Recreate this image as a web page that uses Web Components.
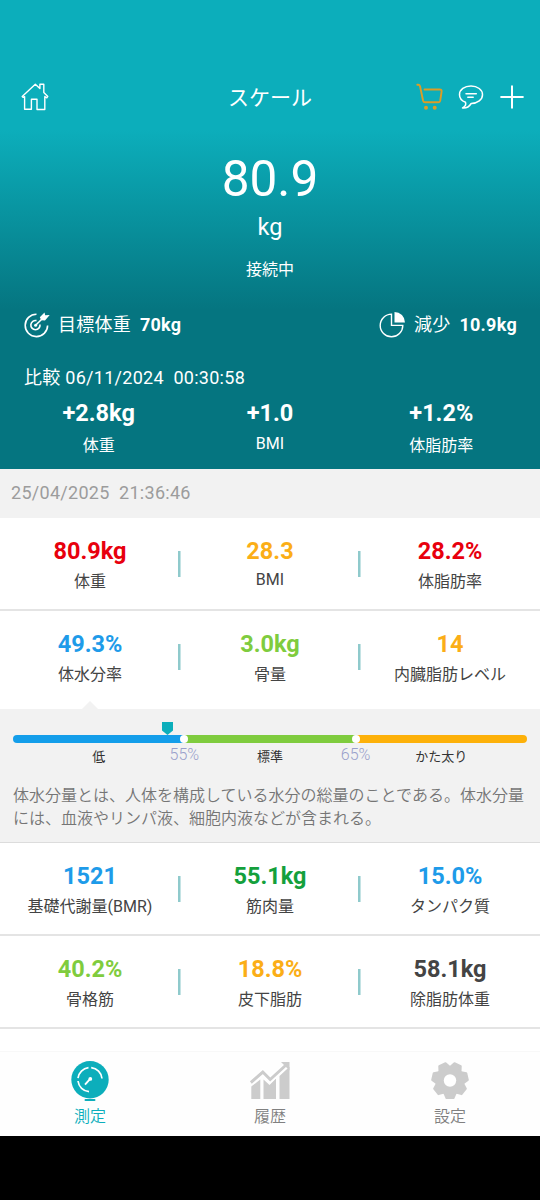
<!DOCTYPE html>
<html lang="ja">
<head>
<meta charset="utf-8">
<title>スケール</title>
<style>
body {
	background: #fff;
	font-family: Roboto, 'Noto Sans CJK JP', sans-serif;
	font-size: 16px;
	margin: 0;
	width: 540px;
}
</style>
</head>
<body>
<scale-app></scale-app>

<script>
const define = (name, style, html) => {
	const template = document.createElement('template');
	template.innerHTML = `<style>${style}</style>${html}`;

	window.customElements.define(name, class extends HTMLElement {
		constructor() {
			super();
			this.attachShadow({ mode: 'open' }).appendChild(template.content.cloneNode(true));
		}
	});
};

const gearTeeth = [0, 1, 2, 3, 4, 5, 6]
	.map((i) => `<path d="M13.500 30 16.500 37h7L26.500 30z" transform="rotate(${i * 360 / 7} 20 19.500)"/>`)
	.join('');

const icons = {
	home: {
		size: [28, 30],
		body: `<path d="M1.200 14.400 14.300 2.200l4.600 4.400V2.200h3.900v8.200l4 4-1 1.400-2-1.200v12.900h-7.800V17.200h-5.600v10H3.600V14.600l-1.400.8z" fill="none" stroke="#fff" stroke-width="1.400" stroke-linejoin="round"/>`
	},
	cart: {
		size: [28, 28],
		body: `<g fill="none" stroke="#dc9d26" stroke-width="1.900" stroke-linecap="round" stroke-linejoin="round"><path d="M1.300 1.800h.8q1.600 0 2 1.700l3 14.200q.4 1.600 2 1.600h13q1.700 0 2.100-1.600l1.400-9.200q.2-2-1.800-2H8.500"/></g><circle cx="10" cy="24.800" r="2" fill="#dc9d26"/><circle cx="18.700" cy="24.800" r="2" fill="#dc9d26"/>`
	},
	chat: {
		size: [26, 26],
		body: `<g fill="none" stroke="#fff" stroke-width="1.500" stroke-linecap="round" stroke-linejoin="round"><path d="M13 2C6.500 2 1.500 5.600 1.500 10.700c0 3.400 2.400 6.200 6 7.600.8 2.500-.6 4.500-3 5.700 4.300.4 7-1.700 8.700-4.500 6.400 0 11.300-3.900 11.300-8.800C24.500 5.700 19.500 2 13 2z"/><path d="M8 9.800h10.300M9.800 13.200h5.400"/></g>`
	},
	plus: {
		size: [24, 24],
		body: `<path d="M12 .4v23.200M.4 12h23.200" stroke="#fff" stroke-width="2"/>`
	},
	target: {
		size: [27, 27],
		body: `<g fill="none" stroke="#fff" stroke-width="1.600"><path d="M13.500 3.200A11.200 11.200 0 1 0 24.600 14.500"/><path d="M13.500 9.600A4.600 4.600 0 1 0 17 13.500"/><path d="M12.600 14.300 20 7"/></g><circle cx="12.600" cy="14.300" r="1.500" fill="#fff"/><path d="m16.800 6.300 4.700-4.800.7 2.800 4.500-.2-4.700 5.500-3.700-.3z" fill="#fff"/>`
	},
	pie: {
		size: [27, 27],
		body: `<path d="M12.500 3.100A11.300 11.300 0 1 0 23.800 14.400H12.500z" fill="none" stroke="#fff" stroke-width="1.400"/><path d="M15.500 1v10.500H26A10.500 10.500 0 0 0 15.500 1z" fill="#fff"/>`
	},
	gauge: {
		size: [38, 41],
		body: `<circle cx="19" cy="18.700" r="18.700" fill="#0caebb"/><path d="M14.500 39h9" stroke="#0caebb" stroke-width="2" stroke-linecap="round"/><g fill="none" stroke="#fff" stroke-width="1.700"><path d="M7 17.200A12 12 0 0 1 17.500 6.700M20.200 6.600A12 12 0 0 1 31 17.500M7 20A12 12 0 0 0 18 30.600"/><path d="m14 23.700 4.500-5" stroke-width="1.900"/></g><circle cx="19.300" cy="17.900" r="1.900" fill="#fff"/>`
	},
	chart: {
		size: [40, 39],
		body: `<g fill="#ccc"><path d="M1.300 25.500 10.300 18.500V38h-9zM13.500 18.500 19.500 24l6.500-6.500V38H13.500zM29.500 15l10-9.300V38h-10z"/></g><path d="M.8 21.500 12.800 11l7.400 7.500L35.500 4.500" fill="none" stroke="#fff" stroke-width="6"/><path d="M.8 21.500 12.800 11l7.400 7.500L35.500 4.500" fill="none" stroke="#ccc" stroke-width="3"/><path d="M31 1h8.500v8.500z" fill="#ccc"/>`
	},
	gear: {
		size: [40, 39],
		body: `<g fill="#ccc" stroke="#ccc" stroke-width="2" stroke-linejoin="round">${gearTeeth}</g><circle cx="20" cy="19.500" r="14.500" fill="#ccc"/><circle cx="20" cy="19.500" r="6.200" fill="#fff"/>`
	}
};

class ScaleIcon extends HTMLElement {
	connectedCallback() {
		const { size: [w, h], body } = icons[this.getAttribute('name')];
		this.attachShadow({ mode: 'open' }).innerHTML = `
			<style>
			:host { display: block; flex: none; height: ${h}px; width: ${w}px; }
			svg { display: block; }
			</style>
			<svg width="${w}" height="${h}" viewBox="0 0 ${w} ${h}">${body}</svg>`;
	}
}

window.customElements.define('scale-icon', ScaleIcon);

// One figure with its caption below. Captions without kana or kanji sit a little higher.
class ScaleMetric extends HTMLElement {
	connectedCallback() {
		const label = this.getAttribute('label');
		const lineHeight = /^[\x00-\x7f]+$/.test(label) ? 20 : 24;
		this.attachShadow({ mode: 'open' }).innerHTML = `
			<style>
			:host { display: block; text-align: center; }
			.value { color: ${this.getAttribute('color') || 'inherit'}; font-size: 23.5px; font-weight: 700; line-height: 28px; }
			.label { color: var(--label-color, #444); line-height: ${lineHeight}px; margin-top: var(--label-gap, 5px); white-space: nowrap; }
			</style>
			<div class="value">${this.getAttribute('value')}</div>
			<div class="label">${label}</div>`;
	}
}

window.customElements.define('scale-metric', ScaleMetric);

define('scale-toolbar', `
:host {
	align-items: center;
	box-sizing: border-box;
	display: grid;
	grid-template-columns: 1fr auto 1fr;
	height: 60px;
	padding: 0 16px 0 21px;
}
.title { font-size: 21px; line-height: 30px; padding-top: 2px; transform: translateX(-2.500px); }
.actions { align-items: center; display: flex; gap: 16px; justify-content: flex-end; }
.actions :first-child { margin-right: -2px; }
`, `
<scale-icon name="home"></scale-icon>
<div class="title"><slot></slot></div>
<div class="actions">
	<scale-icon name="cart"></scale-icon>
	<scale-icon name="chat"></scale-icon>
	<scale-icon name="plus"></scale-icon>
</div>
`);

define('scale-goal', `
:host { align-items: center; display: flex; font-size: 18px; letter-spacing: .28px; line-height: 28px; }
.text { margin-left: 8px; padding-top: 1px; }
::slotted(b) { margin-left: 4px; }
`, `
<slot name="icon"></slot>
<div class="text"><slot></slot></div>
`);

define('scale-header', `
:host {
	--label-color: #fff;
	--label-gap: 7px;
	background: linear-gradient(#0caebb 0, #0caebb 130px, #057580 310px, #057580 100%);
	box-sizing: border-box;
	color: #fff;
	display: block;
	flex: none;
	height: 469px;
	padding-top: 67px;
}
.weight { font-size: 49.5px; line-height: 60px; margin-top: 22px; text-align: center; }
.unit { font-size: 23.5px; line-height: 30px; margin-top: 3px; text-align: center; }
.state { line-height: 24px; margin-top: 16px; text-align: center; }
.goals { display: flex; justify-content: space-between; margin: 28px 23px 0; }
.since { font-size: 18px; letter-spacing: .28px; line-height: 28px; margin: 25px 0 0 24px; white-space: pre; }
.changes { display: grid; grid-template-columns: repeat(3, 1fr); margin: 7px 13px 0; }
`, `
<scale-toolbar>スケール</scale-toolbar>
<div class="weight">80.9</div>
<div class="unit">kg</div>
<div class="state">接続中</div>
<div class="goals">
	<scale-goal><scale-icon slot="icon" name="target"></scale-icon>目標体重 <b>70kg</b></scale-goal>
	<scale-goal><scale-icon slot="icon" name="pie"></scale-icon>減少 <b>10.9kg</b></scale-goal>
</div>
<div class="since">比較 06/11/2024  00:30:58</div>
<div class="changes">
	<scale-metric value="+2.8kg" label="体重"></scale-metric>
	<scale-metric value="+1.0" label="BMI"></scale-metric>
	<scale-metric value="+1.2%" label="体脂肪率"></scale-metric>
</div>
`);

define('scale-date', `
:host {
	background: #f2f2f2;
	box-sizing: border-box;
	color: #9c9c9c;
	display: block;
	flex: none;
	font-size: 18px;
	height: 49px;
	letter-spacing: .28px;
	line-height: 48px;
	padding-left: 11px;
	white-space: pre;
}
`, `<slot></slot>`);

define('scale-row', `
:host {
	border-bottom: 2px solid #e4e4e4;
	box-sizing: border-box;
	display: grid;
	flex: none;
	grid-template-columns: repeat(3, 1fr);
	height: 93px;
	padding-top: 19px;
}
:host([open]) { border-bottom: 0; height: 98px; }
::slotted(scale-metric:not(:last-child)) {
	background: linear-gradient(#8fcacc, #8fcacc) right -1px top 14px / 3px 26px no-repeat;
}
/* the last pixel of each divider falls into the next column */
::slotted(scale-metric:not(:first-child)) {
	box-shadow: none;
}
::slotted(scale-metric:nth-child(2)) {
	background:
		linear-gradient(#8fcacc, #8fcacc) right -1px top 14px / 3px 26px no-repeat,
		linear-gradient(#c4e3e4, #c4e3e4) left top 14px / 1px 26px no-repeat;
}
::slotted(scale-metric:last-child) {
	background: linear-gradient(#c4e3e4, #c4e3e4) left top 14px / 1px 26px no-repeat;
}
`, `<slot></slot>`);

define('scale-range', `
:host {
	background: #f2f2f2;
	border-bottom: 1px solid #dcdcdc;
	box-sizing: border-box;
	display: block;
	flex: none;
	height: 134px;
	padding: 26px 13px 0;
	position: relative;
}
.arrow {
	border: 8px solid transparent;
	border-bottom-color: #f2f2f2;
	border-top: 0;
	left: 82px;
	position: absolute;
	top: -8px;
}
.bar { border-radius: 4px; display: grid; grid-template-columns: repeat(3, 1fr); height: 8px; position: relative; }
.bar span:nth-child(1) { background: #149eea; border-radius: 4px 0 0 4px; }
.bar span:nth-child(2) { background: #7fcc3e; }
.bar span:nth-child(3) { background: #fdb10a; border-radius: 0 4px 4px 0; }
.bar i { background: #fff; border-radius: 50%; height: 8px; position: absolute; transform: translateX(-50%); width: 8px; }
.marker {
	background: #0caebb;
	clip-path: polygon(0 0, 100% 0, 100% 66%, 50% 100%, 0 66%);
	height: 13px;
	left: 149px;
	position: absolute;
	top: -13px;
	width: 11px;
}
.names { color: #333; display: grid; font-size: 13px; grid-template-columns: repeat(3, 1fr); line-height: 20px; margin-top: 4px; position: relative; text-align: center; }
.names b { color: #999fcb; font-size: 16px; font-weight: 350; position: absolute; top: -2px; transform: translateX(-50%); }
p { color: #757575; font-weight: 350; line-height: 23px; margin: 17px 0 0; }
`, `
<div class="arrow"></div>
<div class="bar">
	<span></span><span></span><span></span>
	<i style="left: 33.33%"></i><i style="left: 66.66%"></i>
	<div class="marker"></div>
</div>
<div class="names">
	<span>低</span><span>標準</span><span>かた太り</span>
	<b style="left: 33.33%">55%</b><b style="left: 66.66%">65%</b>
</div>
<p><slot></slot></p>
`);

define('scale-tab', `
:host { align-items: center; color: #808080; display: flex; flex-direction: column; font-weight: 350; }
:host([selected]) { color: #0caebb; }
.icon { align-items: flex-start; display: flex; height: 41px; }
.label { line-height: 24px; margin-top: 3px; }
`, `
<div class="icon"><slot name="icon"></slot></div>
<div class="label"><slot></slot></div>
`);

define('scale-tabs', `
:host {
	background: #fefefe;
	border-bottom: 64px solid #000;
	border-top: 1px solid #f8f8f8;
	box-sizing: border-box;
	display: grid;
	flex: none;
	grid-template-columns: repeat(3, 1fr);
	height: 149px;
	margin-top: 22px;
	padding-top: 9px;
}
`, `<slot></slot>`);

define('scale-app', `
:host { display: flex; flex-direction: column; height: 1200px; overflow: hidden; width: 540px; }
`, `
<scale-header></scale-header>
<scale-date>25/04/2025  21:36:46</scale-date>
<scale-row>
	<scale-metric value="80.9kg" label="体重" color="#e8000d"></scale-metric>
	<scale-metric value="28.3" label="BMI" color="#fbae17"></scale-metric>
	<scale-metric value="28.2%" label="体脂肪率" color="#e8000d"></scale-metric>
</scale-row>
<scale-row open>
	<scale-metric value="49.3%" label="体水分率" color="#1e9be9"></scale-metric>
	<scale-metric value="3.0kg" label="骨量" color="#7fcc3e"></scale-metric>
	<scale-metric value="14" label="内臓脂肪レベル" color="#fbae17"></scale-metric>
</scale-row>
<scale-range>体水分量とは、人体を構成している水分の総量のことである。体水分量には、血液やリンパ液、細胞内液などが含まれる。</scale-range>
<scale-row>
	<scale-metric value="1521" label="基礎代謝量(BMR)" color="#1e9be9"></scale-metric>
	<scale-metric value="55.1kg" label="筋肉量" color="#14a03c"></scale-metric>
	<scale-metric value="15.0%" label="タンパク質" color="#1e9be9"></scale-metric>
</scale-row>
<scale-row>
	<scale-metric value="40.2%" label="骨格筋" color="#7fcc3e"></scale-metric>
	<scale-metric value="18.8%" label="皮下脂肪" color="#fbae17"></scale-metric>
	<scale-metric value="58.1kg" label="除脂肪体重" color="#444"></scale-metric>
</scale-row>
<scale-tabs>
	<scale-tab selected><scale-icon slot="icon" name="gauge"></scale-icon>測定</scale-tab>
	<scale-tab><scale-icon slot="icon" name="chart"></scale-icon>履歴</scale-tab>
	<scale-tab><scale-icon slot="icon" name="gear"></scale-icon>設定</scale-tab>
</scale-tabs>
`);
</script>
</body>
</html>
